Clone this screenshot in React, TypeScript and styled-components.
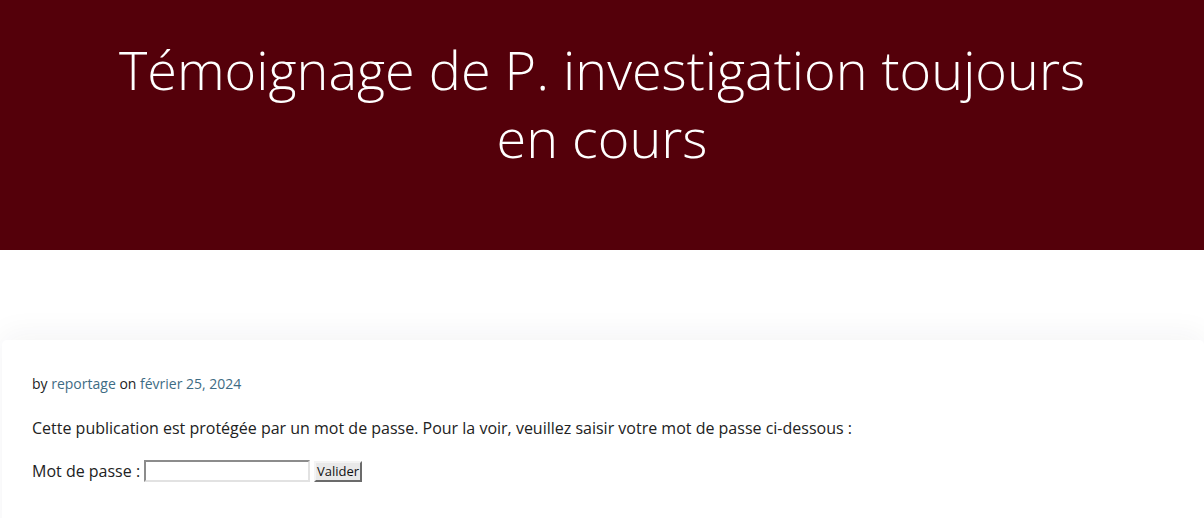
import React from "react";
import styled, { createGlobalStyle } from "styled-components";

const GlobalStyle = createGlobalStyle`
  html, body {
    margin: 0;
    padding: 0;
    background: #fff;
    font-family: "Open Sans", "Liberation Sans", sans-serif;
    color: #222;
  }
  * {
    box-sizing: border-box;
  }
`;

const App: React.FC = () => {
  return (
    <>
      <GlobalStyle />
      <Page>
        <Hero>
          <Title>Témoignage de P. investigation toujours en cours</Title>
        </Hero>
        <Card>
          <Meta>
            by <MetaLink href="#">reportage</MetaLink> on{" "}
            <MetaLink href="#">février 25, 2024</MetaLink>
          </Meta>
          <Notice>
            Cette publication est protégée par un mot de passe. Pour la voir,
            veuillez saisir votre mot de passe ci-dessous :
          </Notice>
          <PasswordForm onSubmit={(e) => e.preventDefault()}>
            <label htmlFor="pwbox">Mot de passe :</label>
            <PasswordInput id="pwbox" type="password" />
            <SubmitButton type="submit">Valider</SubmitButton>
          </PasswordForm>
        </Card>
      </Page>
    </>
  );
};

export default App;

const Page = styled.div`
  min-height: 518px;
  overflow: hidden;
`;

const Hero = styled.header`
  height: 250px;
  background-color: #54000a;
  padding: 35px 60px 0;
  display: flex;
  justify-content: center;
`;

const Title = styled.h1`
  margin: 0;
  max-width: 1000px;
  color: #fff;
  font-weight: 300;
  font-size: 54px;
  line-height: 68px;
  text-align: center;
`;

const Card = styled.article`
  margin: 90px 0 0 2px;
  padding: 33px 30px 40px;
  background: #fff;
  border-radius: 5px;
  box-shadow: 0 -6px 30px rgba(30, 40, 60, 0.05);
  min-height: 200px;
`;

const Meta = styled.div`
  font-size: 14px;
  line-height: 22px;
  color: #222;
`;

const MetaLink = styled.a`
  color: #3e6c84;
  text-decoration: none;
`;

const Notice = styled.p`
  margin: 21px 0 0;
  font-size: 16px;
  line-height: 24px;
`;

const PasswordForm = styled.form`
  margin: 19px 0 0;
  font-size: 16px;
  line-height: 24px;
  display: flex;
  align-items: center;
  gap: 4px;
`;

const PasswordInput = styled.input`
  width: 166px;
  height: 22px;
  border: 2px solid;
  border-color: #8c8c8c #e2e2e2 #e2e2e2 #8c8c8c;
  background: #fff;
  padding: 0 2px;
  font-size: 13px;
`;

const SubmitButton = styled.button`
  height: 21px;
  padding: 0 1px;
  border: 2px solid;
  border-color: #f4f4f4 #6b6b6b #6b6b6b #f4f4f4;
  background: #e9e9e9;
  font-family: "Open Sans", "Liberation Sans", sans-serif;
  font-size: 13px;
  line-height: 15px;
  color: #111;
  border-radius: 0;
`;
